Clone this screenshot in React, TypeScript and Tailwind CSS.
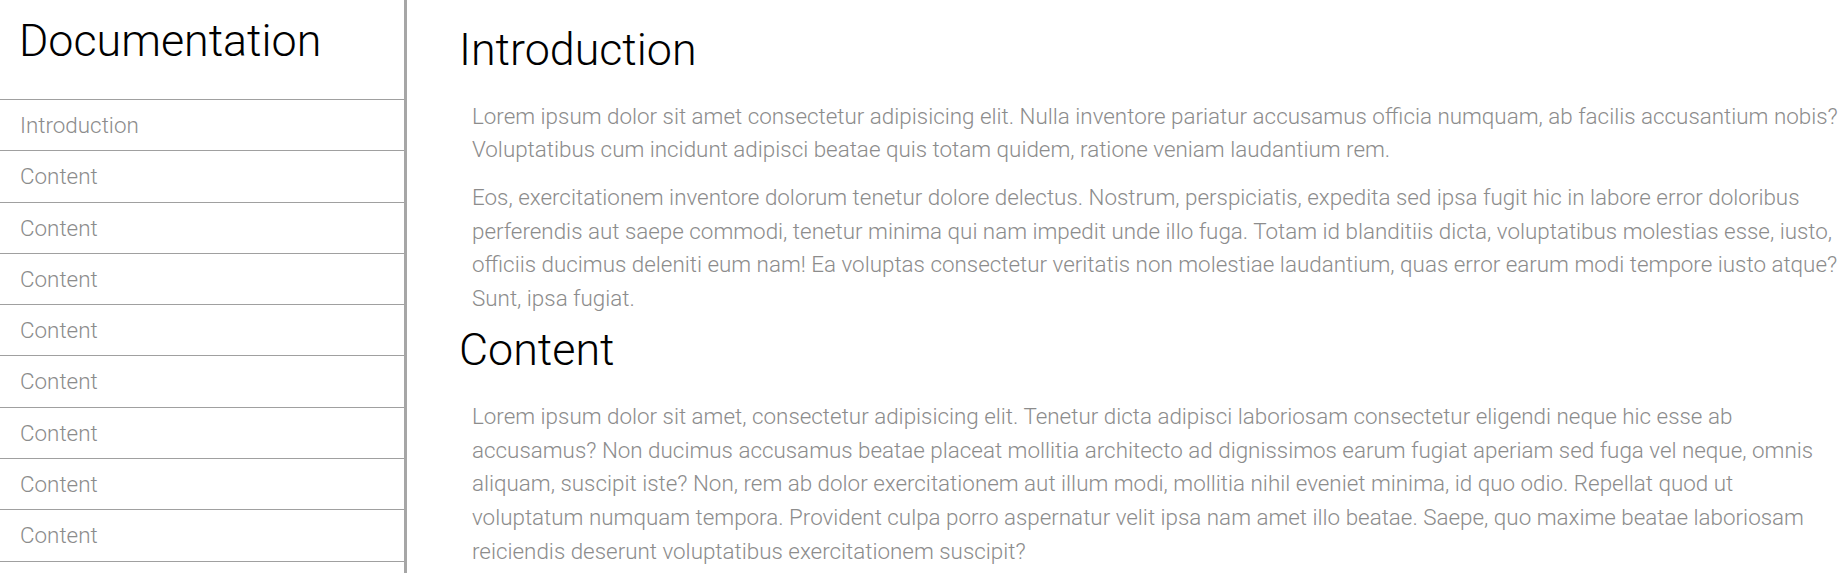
import React from "react";

const navItems = ["Introduction", "Content", "Content", "Content", "Content", "Content", "Content", "Content", "Content"];

const Sidebar: React.FC = () => {
    return (
        <nav className="w-[407px] shrink-0 h-full border-r-[3px] border-[#a6a6a6] bg-white">
            <div className="h-[100px] border-b border-[#a0a0a0] pl-[19px] pt-[14px]">
                <h1 className="text-[44.8px] leading-[1.2] font-light text-black">Documentation</h1>
            </div>
            <ul>
                {navItems.map((item, i) => (
                    <li key={i} className="border-b border-[#a0a0a0]">
                        <a href="#" className="block h-[50.3px] pl-[20px] pt-[12px] text-[22.4px] leading-[26px] font-light text-[#8c8c8c]">
                            {item}
                        </a>
                    </li>
                ))}
            </ul>
        </nav>
    );
};

const Section: React.FC<{ title: string; paragraphs: string[] }> = ({ title, paragraphs }) => {
    return (
        <section className="mb-[8px]">
            <h2 className="text-[44.8px] leading-[1.2] font-light text-black mb-[23px]">{title}</h2>
            {paragraphs.map((p, i) => (
                <p key={i} className="pl-[13px] mb-[14px] last:mb-0 text-[22.4px] leading-[1.5] font-light text-[#8c8c8c]">
                    {p}
                </p>
            ))}
        </section>
    );
};

export default function App() {
    return (
        <div className="flex h-[573px] overflow-hidden bg-white" style={{ fontFamily: "Roboto, 'Liberation Sans', sans-serif" }}>
            <Sidebar />
            <main className="flex-1 min-w-0 pl-[52px] pr-[2px] pt-[23px]">
                <Section
                    title="Introduction"
                    paragraphs={[
                        "Lorem ipsum dolor sit amet consectetur adipisicing elit. Nulla inventore pariatur accusamus officia numquam, ab facilis accusantium nobis? Voluptatibus cum incidunt adipisci beatae quis totam quidem, ratione veniam laudantium rem.",
                        "Eos, exercitationem inventore dolorum tenetur dolore delectus. Nostrum, perspiciatis, expedita sed ipsa fugit hic in labore error doloribus perferendis aut saepe commodi, tenetur minima qui nam impedit unde illo fuga. Totam id blanditiis dicta, voluptatibus molestias esse, iusto, officiis ducimus deleniti eum nam! Ea voluptas consectetur veritatis non molestiae laudantium, quas error earum modi tempore iusto atque? Sunt, ipsa fugiat.",
                    ]}
                />
                <Section
                    title="Content"
                    paragraphs={[
                        "Lorem ipsum dolor sit amet, consectetur adipisicing elit. Tenetur dicta adipisci laboriosam consectetur eligendi neque hic esse ab accusamus? Non ducimus accusamus beatae placeat mollitia architecto ad dignissimos earum fugiat aperiam sed fuga vel neque, omnis aliquam, suscipit iste? Non, rem ab dolor exercitationem aut illum modi, mollitia nihil eveniet minima, id quo odio. Repellat quod ut voluptatum numquam tempora. Provident culpa porro aspernatur velit ipsa nam amet illo beatae. Saepe, quo maxime beatae laboriosam reiciendis deserunt voluptatibus exercitationem suscipit?",
                    ]}
                />
            </main>
        </div>
    );
}
